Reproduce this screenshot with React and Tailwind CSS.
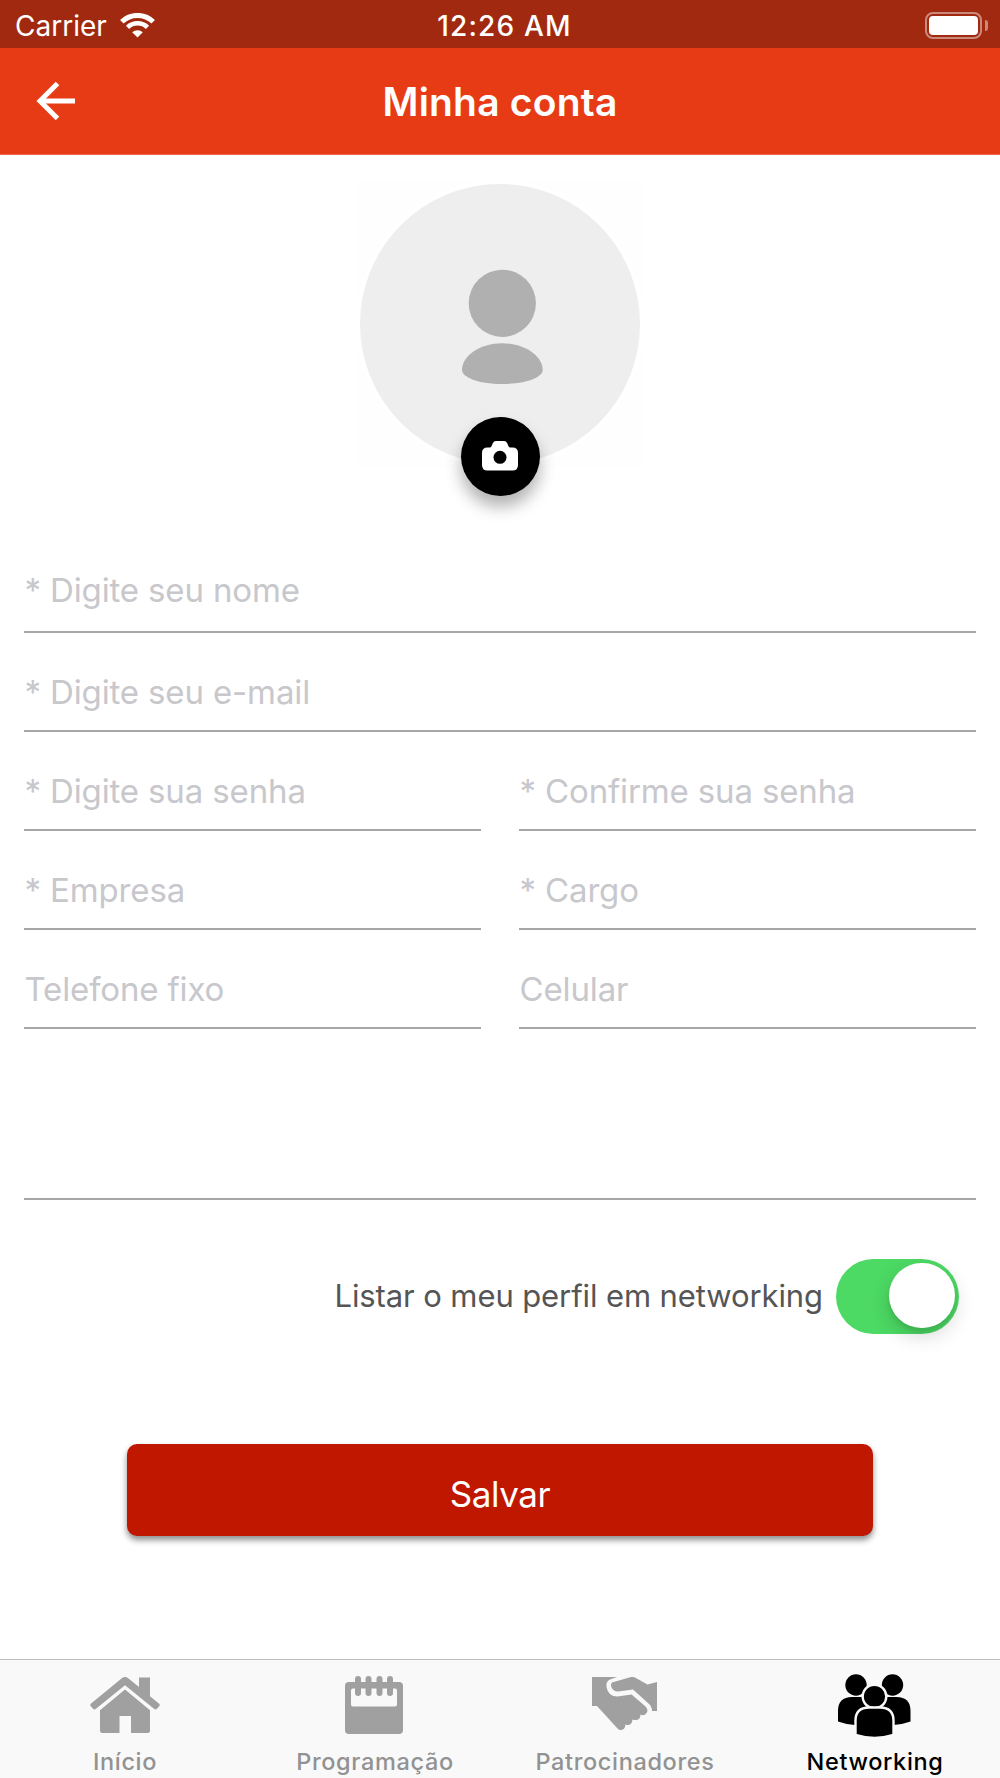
const StatusBar = () => (
    <div className="h-12 pl-[15px] pr-3 grid grid-cols-[1fr_200px_1fr] items-center bg-[#a1290f] text-white text-[28px] leading-[48px]">
        <div className="flex items-center">
            <span className="w-[92px] pt-[2px] whitespace-nowrap">Carrier</span>
            <svg className="ml-[13px]" width="35" height="25" viewBox="0 0 35 25" fill="none">
                <path d="M1.8 8.8A22.5 22.5 0 0 1 33.2 8.8" stroke="white" strokeWidth="5" />
                <path d="M7.5 14.3A14.5 14.5 0 0 1 27.5 14.3" stroke="white" strokeWidth="4.6" />
                <path d="M12.2 19.3A7.7 7.7 0 0 1 22.8 19.3L17.5 24.6Z" fill="white" />
            </svg>
        </div>
        <span className="pt-[2px] pl-[6px] text-center font-medium tracking-[1.2px] whitespace-nowrap">12:26 AM</span>
        <div className="flex items-center justify-end">
            <div className="w-[57px] h-[27px] p-[2px] border-2 border-white/45 rounded-[8px]">
                <div className="h-full bg-white rounded-[4px]" />
            </div>
            <div className="ml-[3px] w-[3px] h-[11px] bg-white/45 rounded-r-full" />
        </div>
    </div>
);

const Header = () => (
    <header className="h-[107px] px-9 grid grid-cols-[60px_1fr_60px] items-center bg-[#e63b15] border-b border-[#ee6a4b] text-white">
        <button type="button" aria-label="Voltar">
            <svg width="40" height="40" viewBox="0 0 40 40" fill="none" stroke="white" strokeWidth="5">
                <path d="M39 20H4" />
                <path d="M21.5 2.5L4 20L21.5 37.5" />
            </svg>
        </button>
        <h1 className="pt-[2px] text-center text-[39px] font-semibold tracking-[0.2px]">Minha conta</h1>
    </header>
);

const Avatar = () => (
    <div className="relative mt-[25px] mx-auto w-[288px] h-[288px] bg-[#fefefe]">
        <div className="w-full h-full rounded-full bg-[#eeeeee] border-4 border-white">
            <svg className="w-full h-full" viewBox="0 0 280 280" fill="#b0b0b0">
                <circle cx="142.3" cy="119.3" r="33.6" />
                <path d="M102 186C102 172 120 159.300 142.300 159.300S182.700 172 182.700 186C182.700 193 167 200 142.300 200S102 193 102 186Z" />
            </svg>
        </div>
        <button
            type="button"
            aria-label="Alterar foto"
            className="absolute left-[104.5px] top-[236.5px] w-[79px] h-[79px] flex items-center justify-center rounded-full bg-black shadow-[0_11px_16px_rgba(0,0,0,0.3)]"
        >
            <svg className="mb-px" width="36" height="30" viewBox="0 0 36 30">
                <path d="M5.5 6.5H7.5Q9 6.5 9.6 5L10.8 2.2Q11.7 0 14 0H22Q24.3 0 25.2 2.2L26.4 5Q27 6.5 28.5 6.5H30.5Q36 6.5 36 12V24Q36 29.5 30.5 29.5H5.5Q0 29.5 0 24V12Q0 6.5 5.5 6.5Z" fill="white" />
                <circle cx="18" cy="16.3" r="6.5" fill="black" />
            </svg>
        </button>
    </div>
);

const Field = ({ placeholder, type = "text", className = "pt-[33px]" }) => (
    <div className={`h-[99px] border-b-2 border-[#a6a6a6] ${className}`}>
        <input
            type={type}
            placeholder={placeholder}
            className="block w-full h-[52px] pl-[0.5px] text-[33px] tracking-[-0.14px] placeholder:text-[#c7c7cc] placeholder:opacity-100 focus:outline-none"
        />
    </div>
);

const HomeIcon = () => (
    <svg width="70" height="57" viewBox="0 0 70 57" fill="#a0a0a0">
        <path d="M35 12.5L60 33.2V53.5Q60 56 57.5 56H41V39H29.5V56H12.5Q10 56 10 53.5V33.2Z" />
        <path d="M31.5 1.4Q35-1.2 38.5 1.4L49 10V.5H60V19.2L69.2 26.7Q70.4 28 69.2 29.3L67 31.8Q65.7 33.3 64 31.8L35 8.3L6 31.8Q4.3 33.3 3 31.8L.8 29.3Q-.4 28 .8 26.7Z" />
    </svg>
);

const CalendarIcon = () => (
    <svg className="mr-[2px]" width="58" height="58" viewBox="0 0 58 58" fill="#a0a0a0">
        <rect y="6" width="58" height="52" rx="4" />
        <rect x="6" y="12.5" width="46" height="18" rx="2" fill="#f9f9f9" />
        <rect x="10" y="0" width="6" height="20" rx="3" />
        <rect x="20.5" y="0" width="6" height="20" rx="3" />
        <rect x="31.5" y="0" width="6" height="20" rx="3" />
        <rect x="42" y="0" width="6" height="20" rx="3" />
    </svg>
);

const HandshakeIcon = () => (
    <svg className="mr-[2px] mb-[3px]" width="65" height="54" viewBox="0 0 65 54" fill="#a0a0a0">
        <path d="M0 0H25L18 2.5Q13.500 4.500 14.500 10Q16 19.500 25.500 19.500L39.500 17.500L53 29Q57 33 54.500 36Q52 39.500 48.500 37.500Q48.500 43 43.500 43Q41.500 43 40.500 42.500Q40 48 35.500 48Q34.500 48 33.500 47.500Q33 53 28.500 53Q27 53 25.500 51.500L5 29H0Z" />
        <path d="M20 5.500L39 0Q41-.5 43 .6L55.500 7.500L65 5V34H60Q60 29.500 56.500 26.500L41 12.500L26 14.500Q21.500 14.500 19.300 10Q18.500 6.500 20 5.500Z" />
    </svg>
);

const PeopleIcon = () => (
    <svg className="mr-px" width="73" height="63" viewBox="0 0 73 63">
        <circle cx="18" cy="11" r="10.700" />
        <circle cx="54.500" cy="11" r="10.700" />
        <path d="M0 47.500V37Q0 23 14 23H24Q38 23 38 37V51H17Q8 50.500 0 47.500Z" />
        <path d="M72.500 47.500V37Q72.500 23 58.500 23H48.500Q34.500 23 34.500 37V51H55.500Q64.500 50.500 72.500 47.500Z" />
        <circle cx="36.500" cy="22.500" r="11.800" stroke="#f9f9f9" strokeWidth="2.400" />
        <path d="M17.500 61V47Q17.500 33.500 31 33.500H42Q55.500 33.500 55.500 47V61Q36.500 67 17.500 61Z" stroke="#f9f9f9" strokeWidth="2.400" />
    </svg>
);

const tabs = [
    { label: "Início", icon: <HomeIcon /> },
    { label: "Programação", icon: <CalendarIcon /> },
    { label: "Patrocinadores", icon: <HandshakeIcon /> },
    { label: "Networking", icon: <PeopleIcon />, active: true },
];

const TabBar = () => (
    <nav className="mt-auto h-[119px] grid grid-cols-4 bg-[#f9f9f9] border-t-[1.5px] border-[#bdbdbd]">
        {tabs.map(({ label, icon, active }) => (
            <a key={label} className={active ? "flex flex-col items-center text-black" : "flex flex-col items-center text-[#929292]"}>
                <div className="h-[90px] flex items-center">{icon}</div>
                <span className="text-[23.5px] leading-[24px] font-medium tracking-[0.65px]">{label}</span>
            </a>
        ))}
    </nav>
);

const App = () => {
    return (
        <div className="w-[1000px] h-[1778px] flex flex-col overflow-hidden bg-white font-['Inter','Liberation_Sans',sans-serif]">
            <StatusBar />
            <Header />
            <Avatar />
            <form onSubmit={(e) => e.preventDefault()} className="flex flex-col">
                <div className="mt-[66px] px-6">
                    <Field placeholder="* Digite seu nome" className="pt-[30px]" />
                    <Field placeholder="* Digite seu e-mail" type="email" />
                    <div className="grid grid-cols-2 gap-x-[38px]">
                        <Field placeholder="* Digite sua senha" type="password" />
                        <Field placeholder="* Confirme sua senha" type="password" />
                        <Field placeholder="* Empresa" />
                        <Field placeholder="* Cargo" />
                        <Field placeholder="Telefone fixo" />
                        <Field placeholder="Celular" />
                    </div>
                    <textarea aria-label="Sobre" className="block w-full h-[171px] resize-none border-b-2 border-[#a6a6a6] focus:outline-none" />
                </div>
                <label className="mt-[58.5px] mr-[41px] flex items-center justify-end gap-[13px]">
                    <span className="pt-px text-[31px] tracking-[-0.1px] text-[#555555]">Listar o meu perfil em networking</span>
                    <span className="w-[123px] h-[75px] pr-[4.5px] pb-px flex items-center justify-end rounded-full bg-[#4cd964]">
                        <span className="w-[65.5px] h-[65.5px] rounded-full bg-white shadow-[0_8px_20px_rgba(0,0,0,0.16),0_4px_4px_rgba(0,0,0,0.08)]" />
                    </span>
                </label>
                <button type="submit" className="mt-[110.5px] mx-auto w-[746px] h-[92px] pt-[8px] rounded-[10px] bg-[#c01800] text-white text-[35px] tracking-[-0.4px] shadow-[0_4px_6px_rgba(0,0,0,0.45)]">
                    Salvar
                </button>
            </form>
            <TabBar />
        </div>
    );
};

export default App;
